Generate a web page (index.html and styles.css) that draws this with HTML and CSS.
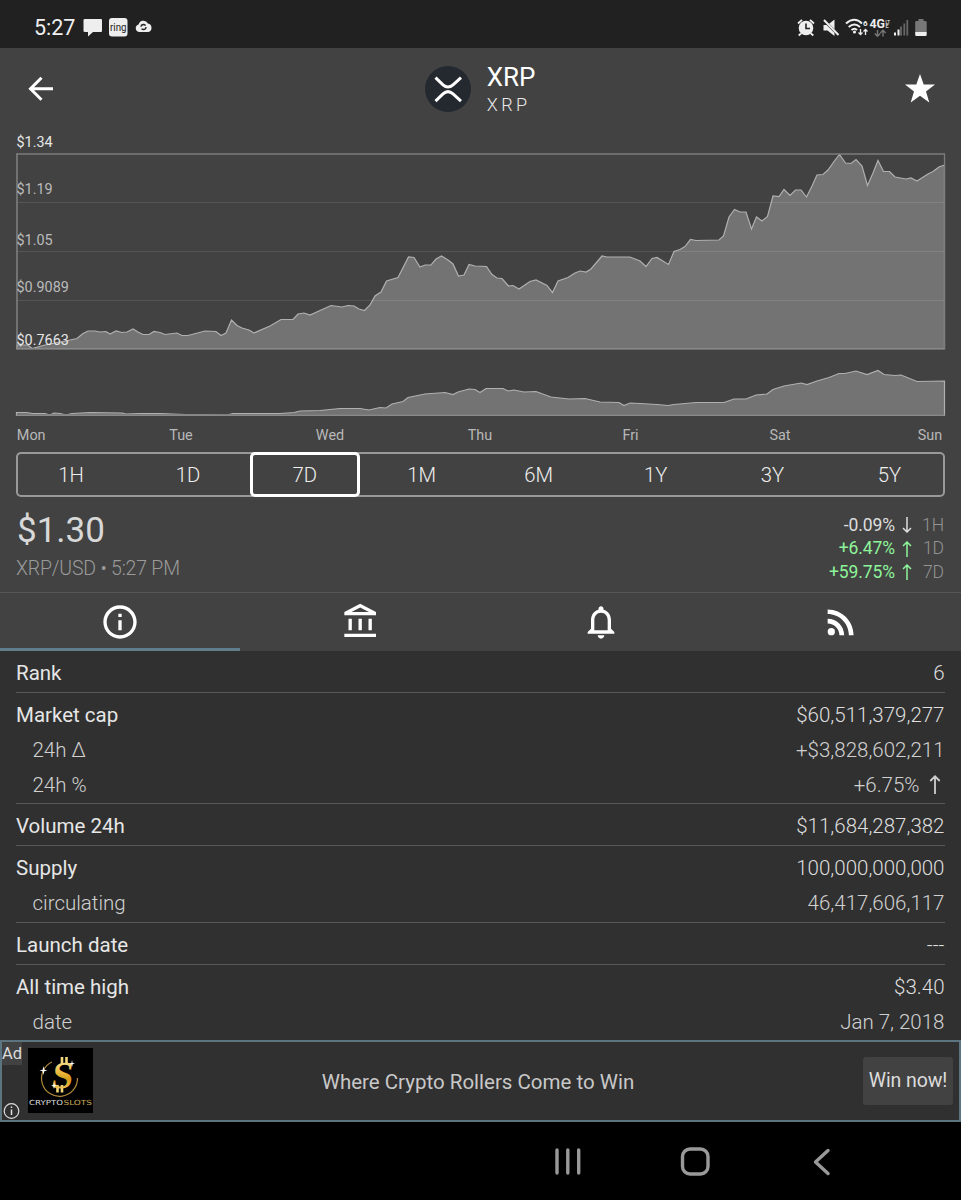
FILE: index.html
```html
<!DOCTYPE html>
<html lang="en">
<head>
	<meta charset="utf-8">
	<title>XRP</title>
	<link rel="stylesheet" href="styles.css">
</head>
<body>
	<div class="statusbar">
		<span class="clock">5:27</span>
		<svg class="status-left" width="70" height="20" viewBox="83 18 70 20">
			<path fill="#eee" d="M85 19h16q1 0 1 1v11q0 1-1 1h-8l-5 4.500V32h-3q-1.500 0-1.500-1V20q0-1 1.500-1z"/>
			<rect x="109" y="18" width="18.500" height="18.500" rx="3" fill="#eee"/>
			<text x="110" y="30.500" class="ring" textLength="16.500" lengthAdjust="spacingAndGlyphs">ring</text>
			<path fill="#eee" d="M139 32a3.900 3.900 0 0 1-.4-7.600 5 5 0 0 1 9.300-.8 4.300 4.300 0 0 1 .4 8.400z"/>
			<circle cx="143.500" cy="27" r="2.500" fill="none" stroke="#222" stroke-width="1.300" stroke-dasharray="6 1.850"/>
		</svg>
		<svg class="status-right" width="132" height="22" viewBox="796 16 132 22">
			<!-- alarm -->
			<circle cx="806" cy="27" r="7.300" fill="#eee"/>
			<path d="M806 22.500v5h4" fill="none" stroke="#222" stroke-width="1.600"/>
			<path d="M798 22.500l4-3.700M814 22.500l-4-3.700M801 32.500l-2.300 2M811 32.500l2.300 2" stroke="#eee" stroke-width="1.800"/>
			<!-- muted -->
			<path fill="#eee" d="M823.500 24h4l7-5.500v16.500l-7-5.500h-4z"/>
			<path d="M822 17.500l17 17" stroke="#222" stroke-width="2.500"/>
			<path d="M824 19l14.500 15" stroke="#eee" stroke-width="2"/>
			<!-- wifi -->
			<path fill="none" stroke="#eee" stroke-width="2" d="M846 22.500q8.500-7.500 16 0M848.700 26q5.800-5 11.300 0M851.500 29q3-2.500 5.500 0"/>
			<circle cx="854.500" cy="31" r="1.600" fill="#eee"/>
			<text x="863" y="25" class="tiny">6</text>
			<path fill="none" stroke="#eee" stroke-width="1.300" d="M860.500 28v5.500M858.500 31.500l2 2 2-2M865.500 34v-5.500M863.500 30.500l2-2 2 2"/>
			<!-- network -->
			<text x="869.500" y="27" class="net" textLength="15.500" lengthAdjust="spacingAndGlyphs">4G</text>
			<text x="885.500" y="22.800" class="lte" textLength="4.500" lengthAdjust="spacingAndGlyphs">LT</text>
			<text x="885.500" y="27" class="lte">E</text>
			<path fill="none" stroke="#777" stroke-width="1.400" d="M877.500 29v6M874.800 32.500l2.700 2.700 2.700-2.700M883 35.500v-6M880.300 32l2.700-2.700 2.700 2.700"/>
			<path d="M895 31.500v3M898.500 28.500v6" stroke="#eee" stroke-width="2"/>
			<path d="M901 25.500v9M904.300 22.500v12M907.300 19v15.500" stroke="#666" stroke-width="1.800"/>
			<!-- battery -->
			<path fill="#777" d="M918.500 18h5v2h2q1.200 0 1.200 1.200V31h-11.500v-9.800q0-1.200 1.300-1.200h2z"/>
			<path fill="#eee" d="M915.200 31h11.500v2.800q0 1.200-1.200 1.200h-9q-1.300 0-1.300-1.200z"/>
		</svg>
	</div>

	<div class="top">
		<div class="header">
			<svg width="28" height="28" viewBox="0 0 28 28">
				<path fill="none" stroke="#fff" stroke-width="3" d="M26 13.800H4M14.500 2.700L3.500 13.800l11 11"/>
			</svg>
			<div class="coin">
				<svg width="46" height="46" viewBox="0 0 46 46">
					<circle cx="23" cy="23" r="23" fill="#23292f"/>
					<path fill="none" stroke="#fff" stroke-width="3" d="M10.500 11.600l7.500 7.200q5 4.500 10 0l8-7.200M10.500 35.100l7.500-7.200q5-4.500 10 0l8 7.200"/>
				</svg>
				<div>
					<div class="coin-name">XRP</div>
					<div class="coin-symbol">XRP</div>
				</div>
			</div>
			<svg class="star" width="30" height="31" viewBox="0 0 30 31">
				<path fill="#fff" d="M15 0l3.700 10.600H30l-9 6.900L24.300 28.500 15 21.800 5.700 28.500 9 17.500 0 10.600h11.300z"/>
			</svg>
		</div>

		<svg class="chart" width="961" height="322" viewBox="0 130 961 322">
			<path class="area" d="M17 348.500V345H28L32 348.500 45 345 70 340 77 338.500 83 333.500 88 331H95L100 332 106 331.500 110 334 116 331 122 332.500 127 332 133 329 138 332 143 334.500H149L154 331.500 160 332.500 165 334.500 177 333 182 335.500H188L205 331 216 331.500 221 335.500 226 333 231.500 320 237 325.500 242 328 249 330 254 333 270 326 281 319.500H293L298 314 304 313 310 315 320 310.500 331 305.500 342 307 348 305.500 354 306 359 309 364.500 310.500 370 305 375 296 381 292 386.500 281 398 277.500 408.500 257 414 257.500 420 267 425 265H431L436 259 441.500 256 448 260 453 264 458.500 276 464 275 469 264.500 475 266 486.500 266.500 492 274.500 497 278 502 278.500 508.500 286 513 285.500 519 289 530 281.500 536 280 547 285.500 552.500 292.500 558 281 568 277.500 575 273 580 271 586 272 591 269 602 256 607 257H630L635 259 640 261 646 266.500 652 258.500 657 257.500 668.500 264.500 674 251.500 680 249.500 685 246.500 690.500 239.500 696 240.500 719 240 723.500 236 729 217 734.500 209.500 740 212H746L751.500 229 756.500 217 762 221 767.500 216.500 773 196 779 196.500 784 189.500 790 195.500 795.500 190H801L806.500 197 812 186 817 175 823 174.500 828 170 834 161.500 839.500 154.500 845.500 163 851 163.500 856 159.500 862 166 867.500 185.500 873 173 878 160.500 883.500 171.500H889.500L895 177 906 179 911 178 917 181 928 174 933 171.500 939 167 944.500 165V348.500z"/>
			<path class="grid" d="M17 202.500H944M17 251.500H944M17 300.500H944"/>
			<path class="frame" d="M16.500 154H944.500V349H16.500"/>
			<path class="axis" d="M17 153.500V349.500"/>
			<path class="area" d="M16.500 415.500V412.500H26L33 413.500H45L50 415 54 413 60 413.500 66 415 72 413.500 90 412.500 122 413 126 414 140 413.500H160L185 414.500 227 415 233 413.500H280L294 412.500 300 411 320 410.500 340 408.500H360L369 410 380 407.500 386 408 392 404 403 401.500 408 397.500 425 394 445 392.500 453 394.500 458 392 469 389 475 389.500 480 392.500 486 388.500H503L508 391 514 390 524 392 536 391.500 551 397 569 399 585 398.500 600 402 619 402.500 624 405.500 630 403 640 403.500 657 404.500 668 405.500 674 404.500 696 402.500H724L734 399H746L756 395 767 394 773 389.500 784 386 801 383 807 384.500 817 381 829 377.500 839 373.500H845L856 371 867 374.500 878 370.500 884 374.500 895 375.500 901 375 917 381.500 944.500 381V415.500z"/>
			<path class="frame" d="M16.500 415H944.500"/>
			<g class="prices">
				<text class="bright" x="16.500" y="147">$1.34</text>
				<text x="16.500" y="194">$1.19</text>
				<text x="16.500" y="245">$1.05</text>
				<text x="16.500" y="292">$0.9089</text>
				<text class="bright" x="16.500" y="345">$0.7663</text>
			</g>
			<g class="days">
				<text x="31.200" y="439.500">Mon</text>
				<text x="181" y="439.500">Tue</text>
				<text x="330" y="439.500">Wed</text>
				<text x="480" y="439.500">Thu</text>
				<text x="630.500" y="439.500">Fri</text>
				<text x="780" y="439.500">Sat</text>
				<text x="930" y="439.500">Sun</text>
			</g>
		</svg>

		<div class="ranges">
			<span class="range">1H</span>
			<span class="range">1D</span>
			<span class="range selected">7D</span>
			<span class="range">1M</span>
			<span class="range">6M</span>
			<span class="range">1Y</span>
			<span class="range">3Y</span>
			<span class="range">5Y</span>
		</div>

		<div class="summary">
			<div>
				<div class="price">$1.30</div>
				<div class="pair">XRP/USD • 5:27 PM</div>
			</div>
			<div class="changes">
				<div class="change">-0.09% <svg class="arrow" width="10" height="16" viewBox="0 0 10 16"><path d="M5 0v15M1 11l4 4 4-4"/></svg> <span class="period">1H</span></div>
				<div class="change up">+6.47% <svg class="arrow" width="10" height="16" viewBox="0 0 10 16"><path d="M5 16V1M1 5l4-4 4 4"/></svg> <span class="period">1D</span></div>
				<div class="change up">+59.75% <svg class="arrow" width="10" height="16" viewBox="0 0 10 16"><path d="M5 16V1M1 5l4-4 4 4"/></svg> <span class="period">7D</span></div>
			</div>
		</div>

		<div class="tabs">
			<div class="tab active">
				<svg width="40" height="40" viewBox="0 0 24 24"><path d="M11 7h2v2h-2zm0 4h2v6h-2zm1-9C6.480 2 2 6.480 2 12s4.480 10 10 10 10-4.480 10-10S17.520 2 12 2zm0 18c-4.410 0-8-3.590-8-8s3.590-8 8-8 8 3.590 8 8-3.590 8-8 8z"/></svg>
			</div>
			<div class="tab">
				<svg class="bank" width="40" height="40" viewBox="0 0 24 24"><path d="M6.500 10h-2v7h2v-7zm6 0h-2v7h2v-7zm8.500 9H2v2h19v-2zm-2.500-9h-2v7h2v-7zm-7-6.740L16.710 6H6.290l5.210-2.740m0-2.260L2 6v2h19V6l-9.500-5z"/></svg>
			</div>
			<div class="tab">
				<svg width="40" height="40" viewBox="0 0 24 24"><path d="M12 22c1.100 0 2-.9 2-2h-4c0 1.100.9 2 2 2zm6-6v-5c0-3.070-1.630-5.640-4.500-6.320V4c0-.83-.67-1.500-1.500-1.500s-1.500.67-1.500 1.500v.68C7.640 5.360 6 7.920 6 11v5l-2 2v1h16v-1l-2-2zm-2 1H8v-6c0-2.480 1.510-4.500 4-4.500s4 2.020 4 4.500v6z"/></svg>
			</div>
			<div class="tab">
				<svg width="40" height="40" viewBox="0 0 24 24"><circle cx="6.180" cy="17.820" r="2.180"/><path d="M4 4.440v2.830c7.030 0 12.730 5.700 12.730 12.730h2.830c0-8.590-6.970-15.560-15.560-15.560zm0 5.660v2.830c3.900 0 7.070 3.170 7.070 7.070h2.830c0-5.470-4.430-9.900-9.900-9.900z"/></svg>
			</div>
		</div>
	</div>

	<div class="stats">
		<div class="group">
			<div class="row"><b>Rank</b><span>6</span></div>
		</div>
		<div class="group">
			<div class="row"><b>Market cap</b><span>$60,511,379,277</span></div>
			<div class="row sub"><span>24h Δ</span><span>+$3,828,602,211</span></div>
			<div class="row sub"><span>24h %</span><span>+6.75% <svg class="arrow big" width="12" height="19" viewBox="0 0 12 19"><path d="M6 19V1.500M1.300 6L6 1.300 10.700 6"/></svg></span></div>
		</div>
		<div class="group">
			<div class="row"><b>Volume 24h</b><span>$11,684,287,382</span></div>
		</div>
		<div class="group">
			<div class="row"><b>Supply</b><span>100,000,000,000</span></div>
			<div class="row sub"><span>circulating</span><span>46,417,606,117</span></div>
		</div>
		<div class="group">
			<div class="row"><b>Launch date</b><span>---</span></div>
		</div>
		<div class="group">
			<div class="row"><b>All time high</b><span>$3.40</span></div>
			<div class="row sub"><span>date</span><span>Jan 7, 2018</span></div>
		</div>
	</div>

	<div class="ad">
		<div class="ad-side">
			<span class="ad-label">Ad</span>
			<svg width="18" height="18" viewBox="0 0 18 18">
				<circle cx="9.500" cy="9" r="7.300" fill="none" stroke="#ddd" stroke-width="1.200"/>
				<path d="M9.500 7.500v5.500M9.500 4.500v1.600" stroke="#ddd" stroke-width="1.500"/>
			</svg>
		</div>
		<svg class="ad-logo" width="65" height="65" viewBox="0 0 65 65">
			<defs>
				<linearGradient id="gold" x1="0" y1="0" x2="0" y2="1">
					<stop offset="0" stop-color="#fff3c0"/>
					<stop offset=".45" stop-color="#e9b93c"/>
					<stop offset=".6" stop-color="#d59a1c"/>
					<stop offset="1" stop-color="#ffe680"/>
				</linearGradient>
			</defs>
			<rect width="65" height="65" fill="#000"/>
			<path d="M24 14A18 18 0 1 0 49.500 30" fill="none" stroke="#b08a3c" stroke-width="1.200"/>
			<path d="M34 9v7M38.500 9v7M29.500 37v7.500M34 37v7.500" stroke="#f2d67c" stroke-width="2.600"/>
			<text x="0" y="0" class="ad-s" fill="url(#gold)" transform="translate(33 40) skewX(-8)">S</text>
			<path fill="#fff" d="M15.500 18l.8 3.700 3.200.8-3.200.8-.8 3.700-.8-3.700-3.200-.8 3.200-.8zM44 12l.6 3 2.400.6-2.400.6-.6 3-.6-3-2.400-.6 2.400-.6zM26 34l.6 3 2.400.6-2.400.6-.6 3-.6-3-2.400-.6 2.400-.6z"/>
			<text x="1" y="57.300" class="ad-brand" textLength="34" lengthAdjust="spacingAndGlyphs" fill="#ddd">CRYPTO</text>
			<text x="35.500" y="57.300" class="ad-brand" textLength="28.500" lengthAdjust="spacingAndGlyphs" fill="#c9a85a">SLOTS</text>
		</svg>
		<span class="ad-text">Where Crypto Rollers Come to Win</span>
		<span class="ad-button">Win now!</span>
	</div>

	<div class="navbar">
		<svg width="28" height="30" viewBox="0 0 28 30"><path d="M3 3v23M13.800 3v23M24.700 3v23"/></svg>
		<svg width="30" height="30" viewBox="0 0 30 30"><rect x="2.500" y="2" width="25.500" height="25" rx="7.500"/></svg>
		<svg width="24" height="30" viewBox="0 0 24 30"><path d="M20 3.500L7.500 15 20 26.500"/></svg>
	</div>
</body>
</html>
```
FILE: styles.css
```css
body {
	margin: 0;
	width: 961px;
	height: 1200px;
	overflow: hidden;
	background: #303030;
	color: #dedede;
	font-family: Roboto, "Liberation Sans", sans-serif;
	font-weight: 300;
}
svg {
	display: block;
}
.statusbar {
	display: flex;
	align-items: center;
	box-sizing: border-box;
	height: 48px;
	padding: 7px 33px 0 34px;
	background: #212121;
}
.clock {
	width: 49px;
	font-size: 21.5px;
	font-weight: 400;
	color: #f0f0f0;
}
.status-right {
	margin-left: auto;
}
.ring {
	font-size: 10.5px;
	font-weight: 400;
	fill: #222;
}
.tiny {
	font-size: 8px;
	font-weight: 700;
	fill: #eee;
}
.net {
	font-size: 12px;
	font-weight: 700;
	fill: #eee;
}
.lte {
	font-size: 5.5px;
	font-weight: 700;
	fill: #ccc;
}
.top {
	height: 603px;
	background: #424242;
}
.header {
	display: grid;
	grid-template-columns: 1fr auto 1fr;
	align-items: center;
	height: 82px;
	padding: 0 26px 0 27px;
}
.coin {
	display: flex;
	align-items: center;
	gap: 16px;
	margin-right: 2px;
}
.coin-name {
	font-size: 26px;
	line-height: 30px;
	font-weight: 400;
	color: #fff;
}
.coin-symbol {
	font-size: 18px;
	line-height: 25px;
	letter-spacing: 3.5px;
	margin-right: -3.5px;
	color: #e8e8e8;
}
.star {
	justify-self: end;
}

/* chart */
.area {
	fill: #737373;
	stroke: #b0b0b0;
	stroke-width: 1.2;
}
.grid {
	stroke: #fff;
	stroke-opacity: .1;
}
.frame {
	fill: none;
	stroke: #7c7c7c;
	stroke-width: 1.3;
}
.axis {
	stroke: #8c8c8c;
	stroke-width: 1.3;
}
.prices text {
	font-size: 14.4px;
	font-weight: 400;
	fill: #bbb;
}
.prices .bright {
	fill: #e6e6e6;
}
.days text {
	font-size: 14.4px;
	font-weight: 400;
	fill: #b8b8b8;
	text-anchor: middle;
}

.ranges {
	display: flex;
	justify-content: space-between;
	width: 928.5px;
	height: 44.5px;
	margin-left: 16px;
	border-radius: 5px;
	box-shadow: inset 0 0 0 2px #999;
}
.range {
	box-sizing: border-box;
	width: 110px;
	font-size: 20.3px;
	line-height: 47px;
	text-align: center;
	color: #eee;
}
.selected {
	border: 3.5px solid #fff;
	border-radius: 5px;
	line-height: 41px;
}

.summary {
	display: flex;
	justify-content: space-between;
	box-sizing: border-box;
	height: 95.5px;
	padding: 12px 17px 0 17px;
}
.price {
	font-size: 35px;
	line-height: 44px;
	font-weight: 400;
	color: #d8d8d8;
}
.pair {
	margin-left: -1px;
	font-size: 19.5px;
	letter-spacing: -.2px;
	line-height: 32px;
	color: #9a9a9a;
}
.changes {
	padding-top: 5px;
}
.change {
	display: flex;
	justify-content: flex-end;
	align-items: center;
	font-size: 17.5px;
	letter-spacing: -.1px;
	line-height: 23.5px;
	font-weight: 400;
}
.up {
	color: #8df59a;
}
.arrow {
	margin: 0 0 0 7px;
	fill: none;
	stroke: currentColor;
	stroke-width: 1.5;
}
.period {
	width: 32px;
	text-align: right;
	font-weight: 300;
	color: #949494;
}

.tabs {
	display: flex;
	box-sizing: border-box;
	height: 59px;
	border-top: 1.5px solid #565656;
}
.tab {
	display: flex;
	flex: 1;
	justify-content: center;
	box-sizing: border-box;
	padding-top: 9px;
	fill: #fff;
}
.active {
	border-bottom: 3.5px solid #607d8b;
}
.bank {
	margin-left: 1px;
}

/* coin details */
.stats {
	height: 389px;
	padding: 0 16.5px 0 16px;
	overflow: hidden;
}
.group {
	padding: 5px 0 1px;
	border-bottom: 1px solid #585858;
}
.group:last-child {
	border: 0;
}
.row {
	display: flex;
	justify-content: space-between;
	font-size: 20.5px;
	line-height: 34.85px;
}
.row b {
	font-weight: 400;
	color: #e6e6e6;
}
.row span {
	display: flex;
	align-items: center;
}
.sub {
	padding-left: 16.5px;
	color: #d0d0d0;
}
.big {
	margin: 0 4px 0 9px;
	stroke-width: 1.8;
}

.ad {
	display: flex;
	align-items: center;
	box-sizing: border-box;
	height: 82px;
	padding-right: 6px;
	border: 2px solid #5c7380;
	color: #dcdcdc;
	font-weight: 400;
}
.ad-side {
	display: flex;
	flex-direction: column;
	justify-content: space-between;
	height: 78px;
	width: 26px;
}
.ad-label {
	width: 20px;
	font-size: 16.5px;
	line-height: 23px;
	background: #424242;
}
.ad-logo {
	margin-bottom: 1px;
}
.ad-text {
	flex: 1;
	padding-top: 1px;
	text-align: center;
	font-size: 20.5px;
	color: #c8c8c8;
}
.ad-s {
	font: bold 38px "Liberation Serif", serif;
	text-anchor: middle;
}
.ad-brand {
	font-family: "DejaVu Sans", sans-serif;
	font-size: 7px;
}
.ad-button {
	width: 90px;
	font-size: 19.5px;
	letter-spacing: -.1px;
	line-height: 48px;
	text-align: center;
	border-radius: 3px;
	background: #424242;
}

.navbar {
	display: flex;
	align-items: center;
	box-sizing: border-box;
	height: 78px;
	padding: 2px 0 0 554px;
	gap: 98px;
	background: #000;
	fill: none;
	stroke: #999;
	stroke-width: 3.4;
	stroke-linecap: round;
	stroke-linejoin: round;
}
```
